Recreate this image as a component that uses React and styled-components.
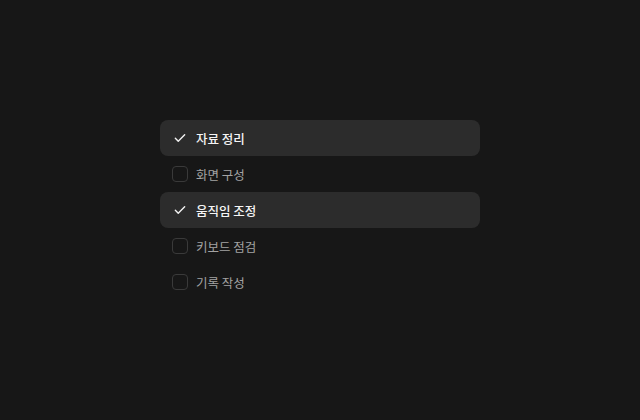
import React, { useState } from 'react';
import styled, { createGlobalStyle } from 'styled-components';

const GlobalStyle = createGlobalStyle`
  html, body { margin: 0; padding: 0; background: #171717; }
  body { font-family: Inter, "Noto Sans CJK KR", sans-serif; }
`;

const Page = styled.div`
  width: 640px;
  height: 420px;
  display: flex;
  align-items: center;
  justify-content: center;
  background: #171717;
`;

const List = styled.ul`
  list-style: none;
  margin: 0;
  padding: 0;
  width: 320px;
  display: flex;
  flex-direction: column;
`;

const Row = styled.li`
  height: 36px;
  display: flex;
  align-items: center;
  gap: 8px;
  padding: 0 12px;
  border-radius: 8px;
  background: ${p => (p.$checked ? '#2c2c2c' : 'transparent')};
  cursor: pointer;
`;

const Box = styled.span`
  width: 16px;
  height: 16px;
  box-sizing: border-box;
  border-radius: 4px;
  border: ${p => (p.$checked ? 'none' : '1px solid #3a3a3a')};
  display: flex;
  align-items: center;
  justify-content: center;
  color: #f2f2f2;
`;

const Label = styled.span`
  font-family: "Noto Sans CJK KR", sans-serif;
  font-size: 12.5px;
  font-weight: ${p => (p.$checked ? 500 : 400)};
  color: ${p => (p.$checked ? '#f5f5f5' : '#a3a3a3')};
`;

const Check = () => (
  <svg width="14" height="14" viewBox="0 0 24 24" fill="none" stroke="currentColor" strokeWidth="2.4" strokeLinecap="round" strokeLinejoin="round">
    <path d="M4 12.5l5 5L20 6.5" />
  </svg>
);

const initial = [
  { label: '자료 정리', checked: true },
  { label: '화면 구성', checked: false },
  { label: '움직임 조정', checked: true },
  { label: '키보드 점검', checked: false },
  { label: '기록 작성', checked: false },
];

export default function App() {
  const [items, setItems] = useState(initial);
  const toggle = i => setItems(items.map((it, j) => (j === i ? { ...it, checked: !it.checked } : it)));

  return (
    <Page>
      <GlobalStyle />
      <List>
        {items.map((it, i) => (
          <Row key={it.label} $checked={it.checked} onClick={() => toggle(i)}>
            <Box $checked={it.checked}>{it.checked && <Check />}</Box>
            <Label $checked={it.checked}>{it.label}</Label>
          </Row>
        ))}
      </List>
    </Page>
  );
}
